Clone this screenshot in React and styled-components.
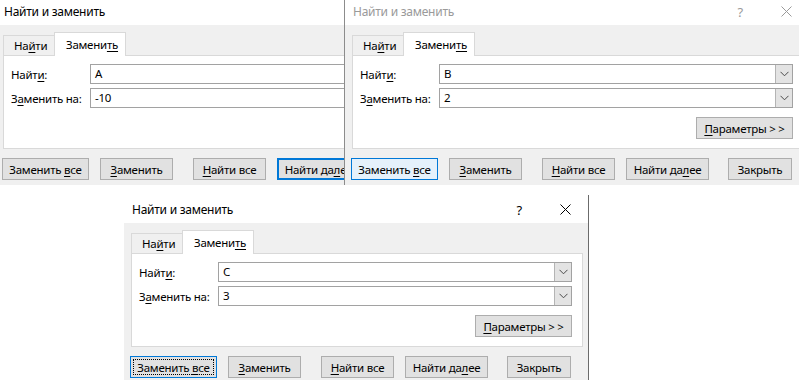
import React from 'react';
import styled, { createGlobalStyle } from 'styled-components';

const GlobalStyle = createGlobalStyle`
  html, body { margin: 0; padding: 0; background: #fff; }
  body {
    font-family: "Noto Sans", "Open Sans", sans-serif;
    font-size: 11.5px;
    letter-spacing: -0.25px;
    color: #000;
  }
`;

const Desktop = styled.div`
  position: relative;
  width: 799px;
  height: 380px;
  overflow: hidden;
  background: #fff;
`;

// windows sit on a free canvas, so they are placed by coordinates
const Window = styled.div`
  position: absolute;
  left: ${p => p.$x}px;
  top: ${p => p.$y}px;
  width: ${p => p.$w || 464}px;
  overflow: hidden;
  background: #fff;
  ${p => p.$edge === 'left' && 'border-left: 1px solid #8c8c8c;'}
  ${p => p.$edge === 'right' && 'border-right: 1px solid #6b6b6b;'}
`;

const Frame = styled.div`
  width: 464px;
  display: flex;
  flex-direction: column;
`;

const TitleBar = styled.div`
  height: ${p => p.$h}px;
  box-sizing: border-box;
  display: flex;
  align-items: flex-end;
  padding: 0 17px 5px 8px;
  line-height: 16px;
  font-size: 12px;
  color: ${p => (p.$inactive ? '#9a9a9a' : '#000')};
`;

const Title = styled.span`
  flex: 1;
`;

const Help = styled.span`
  font-size: 13px;
  margin-right: 38px;
`;

const CloseIcon = styled.svg`
  width: 11px;
  height: 11px;
  margin-bottom: 3px;
`;

const Body = styled.div`
  background: #f0f0f0;
  height: 160px;
  box-sizing: border-box;
  padding: 0 6px;
  display: flex;
  flex-direction: column;
`;

const TabStrip = styled.div`
  height: 30px;
  display: flex;
  align-items: flex-end;
  padding-left: 1px;
`;

const Tab = styled.div`
  position: relative;
  box-sizing: border-box;
  display: flex;
  align-items: center;
  width: ${p => p.$w}px;
  padding-left: ${p => (p.$active ? 11 : 10)}px;
  height: ${p => (p.$active ? 24 : 20)}px;
  background: ${p => (p.$active ? '#fff' : '#f0f0f0')};
  border: 1px solid #d9d9d9;
  border-bottom: none;
  ${p => !p.$active && 'border-right: none;'}
  margin-bottom: ${p => (p.$active ? -1 : 0)}px;
  z-index: ${p => (p.$active ? 1 : 0)};
`;

const Panel = styled.div`
  width: 452px;
  height: 94px;
  box-sizing: border-box;
  margin-left: 1px;
  background: #fff;
  border: 1px solid #d9d9d9;
  padding: 8px 10px 0 7px;
  display: flex;
  flex-direction: column;
`;

const FieldRow = styled.div`
  display: flex;
  align-items: center;
  height: 20px;
  margin-bottom: 4px;
`;

const Label = styled.span`
  width: 79px;
  flex: none;
`;

const Combo = styled.div`
  width: 354px;
  height: 20px;
  box-sizing: border-box;
  flex: none;
  display: flex;
  align-items: stretch;
  border: 1px solid #a2a2a2;
  background: #fff;
`;

const ComboValue = styled.span`
  flex: 1;
  padding-left: 4px;
  line-height: 18px;
`;

const DropButton = styled.span`
  width: 16px;
  display: flex;
  align-items: center;
  justify-content: center;
  background: #e3e3e3;
  border-left: 1px solid #b4b4b4;
`;

const ParamsRow = styled.div`
  display: flex;
  justify-content: flex-end;
  margin-top: 5px;
`;

const ButtonRow = styled.div`
  display: flex;
  margin-top: 9px;
`;

const Button = styled.div`
  position: relative;
  box-sizing: border-box;
  flex: none;
  width: ${p => p.$w}px;
  height: 22px;
  margin-left: ${p => p.$ml || 0}px;
  display: flex;
  align-items: center;
  justify-content: center;
  white-space: nowrap;
  background: ${p => (p.$variant === 'focus' ? '#e5f1fb' : '#e1e1e1')};
  border: ${p =>
    p.$variant === 'default'
      ? '2px solid #0078d7'
      : p.$variant === 'focus' || p.$variant === 'dotted'
      ? '1px solid #0078d7'
      : '1px solid #adadad'};
  ${p =>
    p.$variant === 'dotted' &&
    `&::after {
      content: '';
      position: absolute;
      inset: 2px;
      border: 1px dotted #000;
    }`}
`;

const U = styled.span`
  text-decoration: underline;
  text-underline-offset: 2px;
`;

const Chevron = () => (
  <svg width="9" height="6" viewBox="0 0 9 6">
    <polyline points="0.5,0.8 4.5,4.8 8.5,0.8" fill="none" stroke="#4a4a4a" strokeWidth="1" />
  </svg>
);

const Field = ({ label, value }) => (
  <FieldRow>
    <Label>{label}</Label>
    <Combo>
      <ComboValue>{value}</ComboValue>
      <DropButton><Chevron /></DropButton>
    </Combo>
  </FieldRow>
);

// cropped: the right part of the window is covered by another one, so its controls are left out
function Dialog({ x, y, w, titleH = 25, inactive, cropped, edge, find, replace, focusBtn, focusVariant }) {
  const v = name => (name === focusBtn ? focusVariant : undefined);
  const tint = inactive ? '#9a9a9a' : '#000';
  return (
    <Window $x={x} $y={y} $w={w} $edge={edge}>
      <Frame>
        <TitleBar $h={titleH} $inactive={inactive}>
          <Title>Найти и заменить</Title>
          {!cropped && (
            <>
              <Help>?</Help>
              <CloseIcon viewBox="0 0 11 11">
                <path d="M0.5 0.5 L10.5 10.5 M10.5 0.5 L0.5 10.5" stroke={tint} strokeWidth="1" />
              </CloseIcon>
            </>
          )}
        </TitleBar>
        <Body>
          <TabStrip>
            <Tab $w={51}>На<U>й</U>ти</Tab>
            <Tab $w={72} $active>Замени<U>ть</U></Tab>
          </TabStrip>
          <Panel>
            <Field label={<>Найт<U>и</U>:</>} value={find} />
            <Field label={<>З<U>а</U>менить на:</>} value={replace} />
            {!cropped && (
              <ParamsRow>
                <Button $w={97}><span><U>П</U>араметры &gt; &gt;</span></Button>
              </ParamsRow>
            )}
          </Panel>
          <ButtonRow>
            <Button $w={87} $variant={v('all')}><span>Заменить <U>в</U>се</span></Button>
            <Button $w={73} $ml={11} $variant={v('one')}><span><U>З</U>аменить</span></Button>
            <Button $w={73} $ml={20}><span><U>Н</U>айти все</span></Button>
            <Button $w={83} $ml={11} $variant={v('next')}><span>Найти да<U>л</U>ее</span></Button>
            {!cropped && <Button $w={64} $ml={19}>Закрыть</Button>}
          </ButtonRow>
        </Body>
      </Frame>
    </Window>
  );
}

export default function App() {
  return (
    <>
      <GlobalStyle />
      <Desktop>
        <Dialog x={-4} y={0} w={348} cropped find="A" replace="-10" focusBtn="next" focusVariant="default" />
        <Dialog x={344} y={0} edge="left" inactive find="B" replace="2" focusBtn="all" focusVariant="focus" />
        <Dialog x={124} y={195} titleH={28} edge="right" find="C" replace="3" focusBtn="all" focusVariant="dotted" />
      </Desktop>
    </>
  );
}
